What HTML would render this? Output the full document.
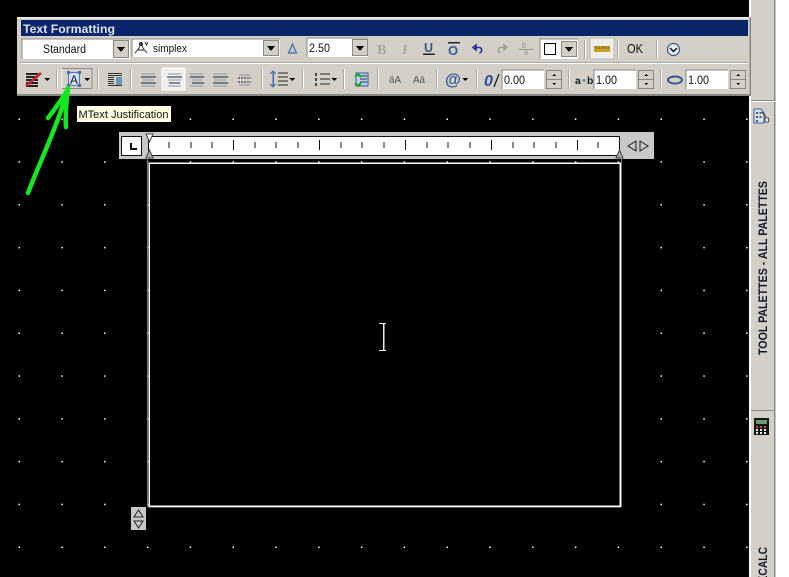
<!DOCTYPE html>
<html><head><meta charset="utf-8"><style>
html,body{margin:0;padding:0;background:#000;width:789px;height:577px;overflow:hidden}
svg{display:block}
text{font-family:"Liberation Sans",sans-serif;fill:#111}
</style></head><body>
<svg width="789" height="577" viewBox="0 0 789 577" xmlns="http://www.w3.org/2000/svg" shape-rendering="crispEdges">
<defs>
<pattern id="g" x="18.5" y="118.5" width="42.8" height="42.8" patternUnits="userSpaceOnUse"><rect width="1.4" height="1.4" fill="#fff"/></pattern>
</defs>
<rect width="789" height="577" fill="#000"/>
<rect x="0" y="100" width="749" height="477" fill="url(#g)"/>

<!-- right panel -->
<rect x="749" y="0" width="40" height="577" fill="#fff"/>
<rect x="751" y="0" width="23" height="577" fill="#d4d0c8"/>
<rect x="774" y="0" width="1.5" height="577" fill="#8a8882"/>
<rect x="751" y="100" width="24" height="1" fill="#8a8882"/><rect x="751" y="101" width="24" height="1" fill="#fff"/>
<rect x="751" y="410" width="24" height="1" fill="#8a8882"/>
<g shape-rendering="auto">
<path d="M754 109h7l3 4v10h-10z" fill="#d8e4f4" stroke="#3a5f9c"/>
<path d="M756 112h2v2h-2zM756 116h2v2h-2zM756 120h2v2h-2zM759.500 112h2v2h-2zM759.500 116h2v2h-2z" fill="#555"/>
<path d="M762 112l4 5" stroke="#222" fill="none"/><rect x="765" y="118" width="3.500" height="4" fill="#eee" stroke="#333" stroke-width=".8"/>
<text transform="translate(767,355) rotate(-90)" font-size="11.500" font-weight="bold" textLength="174" lengthAdjust="spacingAndGlyphs" style="fill:#10182a">TOOL PALETTES - ALL PALETTES</text>
<text transform="translate(767,583) rotate(-90)" font-size="11.500" font-weight="bold" textLength="36" lengthAdjust="spacingAndGlyphs" style="fill:#10182a">KCALC</text>
</g>
<rect x="754" y="418" width="15" height="17" fill="#151515"/>
<rect x="756" y="420" width="11" height="4" fill="#6f9a78"/>
<path d="M756 426h2v2h-2zM760 426h2v2h-2zM764 426h2v2h-2z" fill="#c04848"/>
<path d="M756 429h2v2h-2zM760 429h2v2h-2zM764 429h2v2h-2zM756 432h2v2h-2zM760 432h2v2h-2zM764 432h2v2h-2z" fill="#eee"/>

<!-- toolbar -->
<rect x="17" y="17" width="734" height="79" fill="#d4d0c8"/>
<rect x="17" y="17" width="734" height="1.500" fill="#f0efea"/>
<rect x="17" y="94" width="734" height="2" fill="#8a8882"/>
<rect x="749.500" y="17" width="1.500" height="79" fill="#8a8882"/>
<rect x="21" y="20" width="727" height="16" fill="#0a246a"/>
<text x="23" y="33" font-size="11.500" font-weight="bold" textLength="92" lengthAdjust="spacingAndGlyphs" style="fill:#dfe2ea" shape-rendering="auto">Text Formatting</text>
<rect x="21" y="62" width="727" height="1" fill="#aaa8a2"/><rect x="21" y="63" width="727" height="1" fill="#fff"/>

<!-- Standard combo -->
<rect x="22" y="39" width="108" height="20" fill="#fff"/>
<path d="M22 59V39H130" fill="none" stroke="#8a8882"/>
<rect x="113.500" y="40.500" width="15" height="17" fill="#d4d0c8" stroke="#8a8882"/>
<path d="M117 47h8l-4 5z" fill="#000"/>
<text x="43" y="53" font-size="11.500" textLength="43" lengthAdjust="spacingAndGlyphs" shape-rendering="auto">Standard</text>

<!-- simplex combo -->
<rect x="132" y="39" width="148" height="18" fill="#fff"/>
<path d="M132 57V39H280" fill="none" stroke="#8a8882"/>
<rect x="263.500" y="40.500" width="15" height="15" fill="#d4d0c8" stroke="#8a8882"/>
<path d="M267 46h8l-4 5z" fill="#000"/>
<g shape-rendering="auto" fill="none" stroke="#222" stroke-width=".9">
<path d="M135 53l4-5 2-5 2 5 4 5M138 50h6"/><circle cx="141" cy="44" r="1.500"/><path d="M145 42l1.500 3 1.500-3"/>
</g>
<text x="153" y="52" font-size="11" textLength="34" lengthAdjust="spacingAndGlyphs" shape-rendering="auto">simplex</text>

<!-- A icon -->
<g shape-rendering="auto">
<path d="M292.500 44l4 9h-8z" fill="#b9cde6" stroke="#45699f" stroke-width="1.200"/>
</g>
<!-- 2.50 combo -->
<rect x="307" y="38" width="61" height="19" fill="#fff"/>
<path d="M307 57V38H368" fill="none" stroke="#8a8882"/>
<rect x="352.500" y="39.500" width="15" height="16" fill="#d4d0c8" stroke="#8a8882"/>
<path d="M356 46h8l-4 5z" fill="#000"/>
<text x="309" y="52" font-size="12" textLength="21" lengthAdjust="spacingAndGlyphs" shape-rendering="auto">2.50</text>

<g shape-rendering="auto">
<text x="377" y="54" font-size="14" font-weight="bold" style="font-family:'Liberation Serif',serif;fill:#a6a49e">B</text>
<text x="402" y="54" font-size="14" font-style="italic" font-weight="bold" style="font-family:'Liberation Serif',serif;fill:#a6a49e">I</text>
<text x="424" y="52" font-size="12.500" font-weight="bold" style="fill:#345c94">U</text>
<rect x="423" y="53.500" width="12" height="1.500" fill="#222"/>
<rect x="448" y="42" width="12" height="1.500" fill="#222"/>
<text x="448" y="55" font-size="13" font-weight="bold" style="fill:#345c94">O</text>
<path d="M473 47.500l3-2.500v5zM475 47.500h4c3 0 4 4 .5 5.500" fill="none" stroke="#1c2f9c" stroke-width="1.500"/>
<path d="M507 47.500l-3-2.500v5zM505 47.500h-4c-3 0-4 4-.5 5.500" fill="none" stroke="#98968f" stroke-width="1.300"/>
<text x="522" y="48" font-size="8" style="fill:#98968f">b</text><text x="524" y="55" font-size="8" style="fill:#98968f">a</text>
<path d="M519 49.500h14" stroke="#98968f"/>
</g>
<!-- colour combo -->
<rect x="540" y="39" width="38" height="20" fill="#fff"/>
<path d="M540 59V39H578" fill="none" stroke="#8a8882"/>
<rect x="544.500" y="43.500" width="11" height="11" fill="#fff" stroke="#000"/>
<rect x="561.500" y="41.500" width="15" height="15" fill="#d4d0c8" stroke="#8a8882"/>
<path d="M565 47h8l-4 5z" fill="#000"/>
<rect x="584" y="40" width="1" height="18" fill="#aaa8a2"/><rect x="585" y="40" width="1" height="18" fill="#fff"/>
<rect x="590" y="38" width="24" height="21" fill="#efeee9" stroke="#bbb"/>
<rect x="594" y="46" width="16" height="6" fill="#c6a028"/>
<path d="M596 46v3M599 46v3M602 46v3M605 46v3M608 46v3" stroke="#7a5c10"/>
<rect x="617" y="40" width="1" height="18" fill="#aaa8a2"/><rect x="618" y="40" width="1" height="18" fill="#fff"/>
<text x="627" y="53" font-size="12.500" textLength="16" lengthAdjust="spacingAndGlyphs" shape-rendering="auto">OK</text>
<rect x="656" y="40" width="1" height="18" fill="#aaa8a2"/><rect x="657" y="40" width="1" height="18" fill="#fff"/>
<g shape-rendering="auto"><circle cx="673.500" cy="49.500" r="6" fill="#e6edf6" stroke="#34568c" stroke-width="1.200"/>
<path d="M670 48l3.500 3.500 3.500-3.500" fill="none" stroke="#111" stroke-width="1.500"/></g>

<!-- row 2 -->
<g>
<path d="M26 74h12M26 77h12M26 80h12M26 83h12M26 86h12" stroke="#222" stroke-width="2"/>
<path d="M26 86L41 73" stroke="#c8202c" stroke-width="2.500" shape-rendering="auto"/>
<path d="M44 78h6l-3 3z" fill="#000"/>
<rect x="56" y="69" width="1" height="20" fill="#aaa8a2"/><rect x="57" y="69" width="1" height="20" fill="#fff"/>
<path d="M62 68.500H92V88.500" fill="none" stroke="#8d8b85"/>
<path d="M62 89V69" fill="none" stroke="#fff"/><path d="M62 88.500H92" fill="none" stroke="#8d8b85"/>
<rect x="68.500" y="72.500" width="11" height="13" fill="#cfe0f2" stroke="#4d78b0"/>
<path d="M67 71h3v3h-3zM78 71h3v3h-3zM67 84h3v3h-3zM78 84h3v3h-3z" fill="#3f6ea8"/>
<text x="70" y="84" font-size="12" textLength="8" lengthAdjust="spacingAndGlyphs" style="fill:#222" shape-rendering="auto">A</text>
<path d="M84 78h6l-3 3z" fill="#000"/>
<rect x="97" y="69" width="1" height="20" fill="#aaa8a2"/><rect x="98" y="69" width="1" height="20" fill="#fff"/>
<path d="M108 73.500h14M108 75.500h14M108 77.500h6M108 79.500h6M108 81.500h6M108 83.500h6M108 85.500h14" stroke="#333"/>
<rect x="116" y="77" width="6" height="8" fill="#6a93b8"/>
<rect x="130" y="69" width="1" height="20" fill="#aaa8a2"/><rect x="131" y="69" width="1" height="20" fill="#fff"/>
<path d="M142 74h13M143 80h11M142 86h13" stroke="#7b9cc4"/><path d="M141 77h15M141 83h15" stroke="#222"/>
<rect x="162" y="68" width="23" height="22" fill="#efeee9" stroke="#fff"/>
<path d="M168 74h13M168 80h13M168 86h13" stroke="#7b9cc4"/><path d="M167 77h15M169 83h11" stroke="#222"/>
<path d="M190 74h13M192 80h11M190 86h13" stroke="#7b9cc4"/><path d="M190 77h14M192 83h12" stroke="#222"/>
<path d="M214 74h13M214 80h13M214 86h13" stroke="#7b9cc4"/><path d="M213 77h15M213 83h15" stroke="#222"/>
<path d="M239 75h11M239 85h11" stroke="#7b9cc4"/><path d="M238 78h13M238 82h13" stroke="#222" stroke-dasharray="2 1"/>
<rect x="261" y="69" width="1" height="20" fill="#aaa8a2"/><rect x="262" y="69" width="1" height="20" fill="#fff"/>
<path d="M273 71v16" stroke="#3f6ea8" stroke-width="1.500"/><path d="M270 74l3-3 3 3M270 84l3 3 3-3" fill="none" stroke="#3f6ea8"/>
<path d="M278 73h10M278 77h10M278 81h10M278 85h10" stroke="#222"/>
<path d="M289 78h6l-3 3z" fill="#000"/>
<rect x="302" y="69" width="1" height="20" fill="#aaa8a2"/><rect x="303" y="69" width="1" height="20" fill="#fff"/>
<path d="M315 73h2v3h-2zM315 78h2v3h-2zM315 83h2v3h-2z" fill="#445"/>
<path d="M320 74h10M320 79h10M320 84h10" stroke="#222"/>
<path d="M331 78h6l-3 3z" fill="#000"/>
<rect x="343" y="69" width="1" height="20" fill="#aaa8a2"/><rect x="344" y="69" width="1" height="20" fill="#fff"/>
<rect x="356" y="73" width="12" height="13" fill="#b9d2ec" stroke="#345c94"/>
<path d="M360 76h7M360 79h7M360 82h7" stroke="#234"/>
<path d="M355 77l3-3 3 3M355 83l3 3 3-3" fill="none" stroke="#18a030" stroke-width="2" shape-rendering="auto"/>
<rect x="377" y="69" width="1" height="20" fill="#aaa8a2"/><rect x="378" y="69" width="1" height="20" fill="#fff"/>
</g>
<g shape-rendering="auto">
<text x="389" y="83" font-size="10.500" textLength="12" lengthAdjust="spacingAndGlyphs" style="fill:#55534f">äA</text>
<text x="413" y="83" font-size="10.500" textLength="12" lengthAdjust="spacingAndGlyphs" style="fill:#55534f">Aä</text>
<text x="445" y="85" font-size="17" font-weight="bold" textLength="16" lengthAdjust="spacingAndGlyphs" style="fill:#2e5c98">@</text>
<text x="484" y="86" font-size="16" font-weight="bold" font-style="italic" style="fill:#2a4fa0">0</text>
<path d="M499 74l-5 13" stroke="#111" stroke-width="1.200"/>
<text x="575" y="84" font-size="10.500" font-weight="bold" style="fill:#222">a</text><text x="587" y="84" font-size="10.500" font-weight="bold" style="fill:#222">b</text>
<circle cx="584" cy="80.500" r="1.500" fill="#5c87ad"/>
<ellipse cx="675" cy="80" rx="7" ry="3.500" fill="#d4d0c8" stroke="#345c94" stroke-width="2"/>
</g>
<path d="M462 78h6l-3 3z" fill="#000"/>
<rect x="436" y="69" width="1" height="20" fill="#aaa8a2"/><rect x="437" y="69" width="1" height="20" fill="#fff"/>
<rect x="476" y="69" width="1" height="20" fill="#aaa8a2"/><rect x="477" y="69" width="1" height="20" fill="#fff"/>
<rect x="568" y="69" width="1" height="20" fill="#aaa8a2"/><rect x="569" y="69" width="1" height="20" fill="#fff"/>
<rect x="660" y="69" width="1" height="20" fill="#aaa8a2"/><rect x="661" y="69" width="1" height="20" fill="#fff"/>

<!-- spin inputs -->
<g id="s1">
<rect x="502" y="70" width="42" height="19" fill="#fff"/><path d="M502 89V70H544" fill="none" stroke="#8a8882"/>
<text x="504" y="84" font-size="12" textLength="21" lengthAdjust="spacingAndGlyphs" shape-rendering="auto">0.00</text>
<rect x="546.500" y="70.500" width="15" height="9" fill="#d4d0c8" stroke="#8a8882"/><rect x="546.500" y="79.500" width="15" height="9" fill="#d4d0c8" stroke="#8a8882"/>
<path d="M552 76h4l-2-2zM552 83h4l-2 2z" fill="#000"/>
</g>
<g>
<rect x="594" y="70" width="42" height="19" fill="#fff"/><path d="M594 89V70H636" fill="none" stroke="#8a8882"/>
<text x="596" y="84" font-size="12" textLength="21" lengthAdjust="spacingAndGlyphs" shape-rendering="auto">1.00</text>
<rect x="638.500" y="70.500" width="15" height="9" fill="#d4d0c8" stroke="#8a8882"/><rect x="638.500" y="79.500" width="15" height="9" fill="#d4d0c8" stroke="#8a8882"/>
<path d="M644 76h4l-2-2zM644 83h4l-2 2z" fill="#000"/>
</g>
<g>
<rect x="686" y="70" width="42" height="19" fill="#fff"/><path d="M686 89V70H728" fill="none" stroke="#8a8882"/>
<text x="688" y="84" font-size="12" textLength="21" lengthAdjust="spacingAndGlyphs" shape-rendering="auto">1.00</text>
<rect x="730.500" y="70.500" width="15" height="9" fill="#d4d0c8" stroke="#8a8882"/><rect x="730.500" y="79.500" width="15" height="9" fill="#d4d0c8" stroke="#8a8882"/>
<path d="M736 76h4l-2-2zM736 83h4l-2 2z" fill="#000"/>
</g>

<!-- tooltip -->
<rect x="77" y="106" width="94" height="16" fill="#ffffe1"/>
<text x="78.500" y="118" font-size="11" textLength="90" lengthAdjust="spacingAndGlyphs" style="fill:#111" shape-rendering="auto">MText Justification</text>

<!-- green arrow -->
<g fill="none" stroke="#14e81e" stroke-width="4.500" stroke-linecap="round" stroke-linejoin="round" shape-rendering="auto">
<path d="M28 193C36 172 46 150 53 132S63 106 68 88"/>
<path d="M48 118C54 110 60 102 67 91"/>
<path d="M66 127C65 117 66 105 68 88"/>
</g>

<!-- ruler -->
<rect x="119" y="132" width="535" height="27" fill="#c8c8c8"/>
<rect x="121.500" y="136.500" width="20" height="19" fill="#fff" stroke="#111"/>
<path d="M130 143h2v5h5v2h-7z" fill="#000"/>
<rect x="148.500" y="136.500" width="471" height="19" fill="#fff" stroke="#111"/>
<path d="M169 142v6M191 142v6M212 142v6M255 142v6M276 142v6M298 142v6M341 142v6M362 142v6M384 142v6M427 142v6M448 142v6M470 142v6M513 142v6M534 142v6M556 142v6M598 142v6" stroke="#111"/>
<path d="M233.500 140v10M319.500 140v10M405.500 140v10M491.500 140v10M577.500 140v10" stroke="#111"/>
<g shape-rendering="auto">
<path d="M146 134h7l-3.500 8z" fill="#fff" stroke="#444"/>
<path d="M146 158h7l-3.500-8z" fill="#aaa" stroke="#444"/>
<path d="M616 158h7l-3.500-8z" fill="#aaa" stroke="#444"/>
<path d="M636 141l-8 5 8 5z" fill="none" stroke="#222"/>
<path d="M640 141l8 5-8 5z" fill="none" stroke="#222"/>
</g>

<!-- text frame -->
<rect x="149" y="163" width="471" height="343" fill="#000" stroke="#fff" stroke-width="1.500"/>
<rect x="147" y="159" width="1" height="348" fill="#777"/>
<rect x="621" y="159" width="1" height="348" fill="#777"/>
<rect x="148" y="507" width="473" height="1" fill="#555"/>

<!-- I-beam -->
<path d="M379 323.500h7M379 350.500h7" stroke="#eee" fill="none"/>
<rect x="383" y="323" width="1.500" height="28" fill="#eee"/>

<!-- bottom handle -->
<rect x="131" y="507" width="15" height="23" fill="#c8c8c8"/>
<g shape-rendering="auto" fill="none" stroke="#222"><path d="M138.500 510l-4.500 7h9z"/><path d="M134 521h9l-4.500 7z"/></g>
</svg>
</body></html>
